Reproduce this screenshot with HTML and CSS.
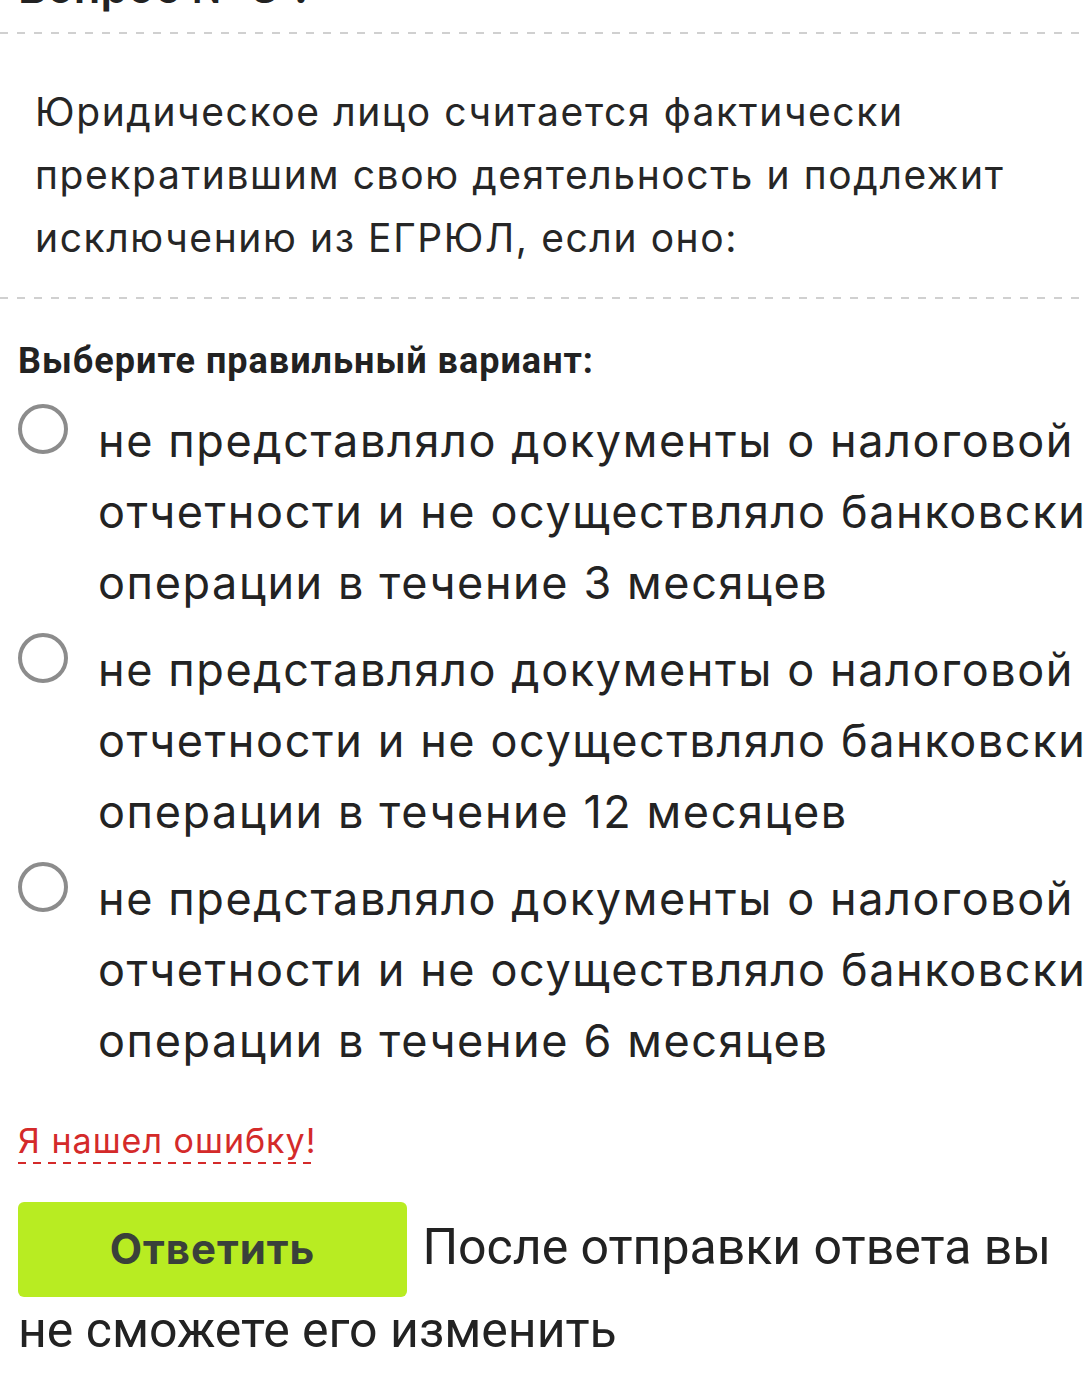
FILE: index.html
```html
<!DOCTYPE html>
<html lang="ru">
<head>
    <meta charset="UTF-8">
    <meta name="viewport" content="width=device-width, initial-scale=1.0">
    <title>Вопрос № 3</title>
    <link rel="stylesheet" href="styles.css">
</head>
<body>
    <div class="page">
        <h2 class="q-title">Вопрос № 3 ?</h2>
        <div class="divider"></div>

        <div class="q-text">
            Юридическое лицо считается фактически прекратившим свою деятельность и подлежит исключению из ЕГРЮЛ, если оно:
        </div>
        <div class="divider"></div>

        <form id="quizForm">
            <p class="hint">Выберите правильный вариант:</p>

            <div class="options">
                <label class="option">
                    <input type="radio" name="answer" value="1">
                    <span class="radio"></span>
                    <span class="option-text">не представляло документы о налоговой отчетности и не осуществляло банковские операции в течение 3 месяцев</span>
                </label>
                <label class="option">
                    <input type="radio" name="answer" value="2">
                    <span class="radio"></span>
                    <span class="option-text">не представляло документы о налоговой отчетности и не осуществляло банковские операции в течение 12 месяцев</span>
                </label>
                <label class="option">
                    <input type="radio" name="answer" value="3">
                    <span class="radio"></span>
                    <span class="option-text">не представляло документы о налоговой отчетности и не осуществляло банковские операции в течение 6 месяцев</span>
                </label>
            </div>

            <a href="#" class="report">Я нашел ошибку!</a>

            <p class="submit-row">
                <button type="submit">Ответить</button>
                После отправки ответа вы не сможете его изменить
            </p>
        </form>
    </div>
</body>
</html>
```

FILE: styles.css
```css
html, body {
    margin: 0;
    padding: 0;
    background: white;
    overflow: hidden;
}
body {
    font-family: Inter, 'Noto Sans', sans-serif;
    color: #222;
}
.page {
    width: 1085px;
}
.q-title {
    margin: -38px 0 0 18px;
    font-size: 44px;
    line-height: 50px;
    font-weight: 600;
    color: #222;
}
.divider {
    height: 2px;
    margin-top: 20px;
    background: linear-gradient(to right, #d0d0d0 8px, transparent 8px) 0 0 / 17px 2px repeat-x;
}
.q-text {
    padding: 46px 40px 28px 35px;
    font-size: 39px;
    line-height: 63px;
    letter-spacing: 1.6px;
    color: #262626;
}
.q-text + .divider {
    margin-top: 0;
}
.hint {
    margin: 42px 0 0 18px;
    font-family: Roboto, sans-serif;
    font-weight: 700;
    font-size: 36px;
    line-height: 40px;
    letter-spacing: 1px;
    color: #222;
}
.options {
    margin-top: 23px;
}
.option {
    display: flex;
    align-items: flex-start;
    margin-bottom: 15px;
    cursor: pointer;
}
.option input {
    display: none;
}
.radio {
    flex: none;
    width: 42px;
    height: 42px;
    margin: 0 30px 0 18px;
    border: 4px solid #8c8c8c;
    border-radius: 50%;
}
.option input:checked + .radio {
    border-color: #b8ec22;
    background: radial-gradient(circle, #b8ec22 45%, transparent 48%);
}
.option-text {
    flex: none;
    width: 1100px;
    margin-top: 1px;
    font-size: 45px;
    line-height: 71px;
    letter-spacing: 1.6px;
    color: #232323;
}
.report {
    display: inline-block;
    margin: 30px 0 0 18px;
    padding-bottom: 3px;
    font-size: 34px;
    line-height: 40px;
    letter-spacing: 1px;
    color: #d42a2a;
    text-decoration: none;
    background: linear-gradient(to right, #d42a2a 8px, transparent 8px) 0 100% / 15px 2px repeat-x;
}
.submit-row {
    margin: 38px 0 0 0;
    padding: 0 20px 0 18px;
    font-family: Roboto, sans-serif;
    font-size: 50px;
    line-height: 60px;
    color: #222;
}
button {
    width: 389px;
    margin: 0 3px 3px 0;
    padding: 24px 0 26px;
    background: #b8ec22;
    color: #3a403a;
    border: none;
    border-radius: 6px;
    font-family: Inter, sans-serif;
    font-weight: 700;
    font-size: 42px;
    line-height: 45px;
    letter-spacing: 1px;
    cursor: pointer;
}
```
